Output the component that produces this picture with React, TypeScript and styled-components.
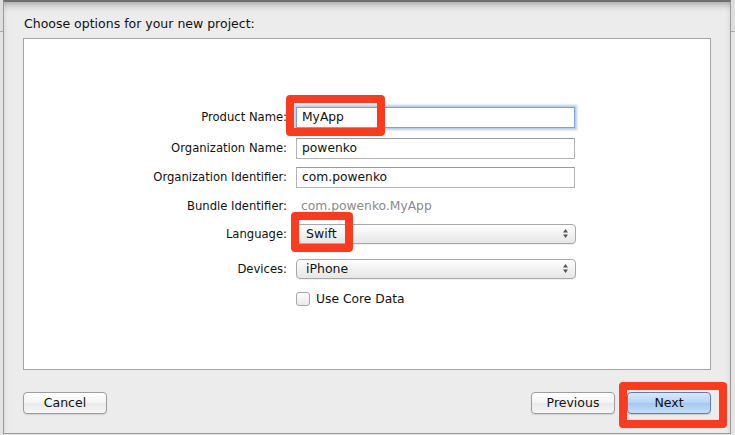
import React from "react";
import styled, { createGlobalStyle } from "styled-components";

const GlobalStyle = createGlobalStyle`
	html, body {
		margin: 0;
		padding: 0;
	}
	body {
		width: 735px;
		height: 435px;
		overflow: hidden;
		background: linear-gradient(#dedede 0, #dedede 31px, #a9a9a9 31px, #a9a9a9 32px, #e4e4e4 32px);
		font-family: "DejaVu Sans", "Liberation Sans", sans-serif;
		font-size: 12px;
		color: #111;
	}
`;

const Sheet = styled.div`
	box-sizing: border-box;
	margin: 0 4px 0 3px;
	height: 434px;
	background: #ececec;
	border-left: 1px solid #9a9a9a;
	border-right: 1px solid #9a9a9a;
	border-bottom: 1px solid #9a9a9a;
	border-top: 2px solid #6f6f6f;
	box-shadow: inset 0 6px 8px -4px rgba(0, 0, 0, 0.35);
	padding: 14px 19px 0 19px;
	display: flex;
	flex-direction: column;
`;

const Title = styled.div`
	font-size: 12.5px;
	height: 22px;
	padding-left: 1px;
`;

const Content = styled.div`
	box-sizing: border-box;
	height: 334px;
	background: #fff;
	border: 1px solid #a4a4a4;
	padding: 68px 0 0 123px;
`;

const Row = styled.div<{ $h: number; $mt: number }>`
	display: flex;
	align-items: center;
	height: ${(p) => p.$h}px;
	margin-top: ${(p) => p.$mt}px;
`;

const Label = styled.div`
	width: 140px;
	text-align: right;
	margin-right: 9px;
	white-space: nowrap;
	font-size: 11.6px;
`;

const TextField = styled.div<{ $focused?: boolean }>`
	box-sizing: border-box;
	width: 279px;
	height: 100%;
	display: flex;
	align-items: center;
	padding-left: 5px;
	background: #fff;
	font-size: 12.3px;
	border: 1px solid ${(p) => (p.$focused ? "#7aa3d6" : "#b4b4b4")};
	border-top-color: ${(p) => (p.$focused ? "#7aa3d6" : "#9a9a9a")};
	box-shadow: ${(p) => (p.$focused ? "0 0 2px 2px rgba(120, 160, 215, 0.55)" : "none")};
`;

const Static = styled.div`
	padding-left: 5px;
	color: #8a8a8a;
	font-size: 12.3px;
`;

const Popup = styled.div`
	box-sizing: border-box;
	width: 280px;
	height: 100%;
	display: flex;
	align-items: center;
	justify-content: space-between;
	padding: 0 6px 0 9px;
	border: 1px solid #a8a8a8;
	border-radius: 4px;
	background: linear-gradient(#ffffff, #f1f1f1 55%, #e6e6e6);
	box-shadow: 0 1px 0 rgba(0, 0, 0, 0.06);
	font-size: 12.5px;
`;

const Arrows = () => (
	<svg width="7" height="11" viewBox="0 0 7 11">
		<path d="M3.5 1 L6 4.5 H1 Z" fill="#555" />
		<path d="M3.5 10 L6 6.5 H1 Z" fill="#555" />
	</svg>
);

const CheckBox = styled.div`
	box-sizing: border-box;
	width: 14px;
	height: 14px;
	margin: 0 6px 0 0;
	border: 1px solid #a6a6a6;
	border-radius: 3px;
	background: linear-gradient(#ffffff, #e9e9e9);
`;

const CheckLabel = styled.span`
	font-size: 12.3px;
`;

const Footer = styled.div`
	display: flex;
	align-items: center;
	height: 61px;
	padding-top: 3px;
`;

const Spacer = styled.div`
	flex: 1;
`;

const Button = styled.div<{ $primary?: boolean }>`
	box-sizing: border-box;
	width: 84px;
	height: 22px;
	display: flex;
	align-items: center;
	justify-content: center;
	border-radius: 4px;
	border: 1px solid ${(p) => (p.$primary ? "#5b7fae" : "#9d9d9d")};
	background: ${(p) =>
		p.$primary
			? "linear-gradient(#d9e9fb, #b5d3f6 50%, #a2c8f3 51%, #c6e0fb)"
			: "linear-gradient(#ffffff, #f3f3f3 50%, #e9e9e9 51%, #f6f6f6)"};
	box-shadow: 0 1px 1px rgba(0, 0, 0, 0.12);
	font-size: 12.5px;
`;

const Mark = styled.div<{ $l: number; $t: number; $w: number; $h: number }>`
	position: absolute;
	left: ${(p) => p.$l}px;
	top: ${(p) => p.$t}px;
	width: ${(p) => p.$w}px;
	height: ${(p) => p.$h}px;
	box-sizing: border-box;
	border: 8px solid #fb3a1e;
	border-radius: 4px;
	pointer-events: none;
`;

const Anchor = styled.div`
	position: relative;
	height: 100%;
`;

const NextWrap = styled.div`
	position: relative;
	margin-left: 12px;
`;

const App: React.FC = () => {
	return (
		<>
			<GlobalStyle />
			<Sheet>
				<Title>Choose options for your new project:</Title>
				<Content>
					<Row $h={21} $mt={0}>
						<Label>Product Name:</Label>
						<Anchor>
							<TextField $focused>MyApp</TextField>
							<Mark $l={-10} $t={-12} $w={99} $h={41} />
						</Anchor>
					</Row>
					<Row $h={21} $mt={10}>
						<Label>Organization Name:</Label>
						<TextField>powenko</TextField>
					</Row>
					<Row $h={21} $mt={8}>
						<Label>Organization Identifier:</Label>
						<TextField>com.powenko</TextField>
					</Row>
					<Row $h={16} $mt={10}>
						<Label>Bundle Identifier:</Label>
						<Static>com.powenko.MyApp</Static>
					</Row>
					<Row $h={20} $mt={10}>
						<Label>Language:</Label>
						<Anchor>
							<Popup>
								<span>Swift</span>
								<Arrows />
							</Popup>
							<Mark $l={-5} $t={-12} $w={62} $h={40} />
						</Anchor>
					</Row>
					<Row $h={20} $mt={15}>
						<Label>Devices:</Label>
						<Popup>
							<span>iPhone</span>
							<Arrows />
						</Popup>
					</Row>
					<Row $h={15} $mt={13}>
						<Label />
						<CheckBox />
						<CheckLabel>Use Core Data</CheckLabel>
					</Row>
				</Content>
				<Footer>
					<Button>Cancel</Button>
					<Spacer />
					<Button>Previous</Button>
					<NextWrap>
						<Button $primary>Next</Button>
						<Mark $l={-8} $t={-10} $w={108} $h={46} />
					</NextWrap>
				</Footer>
			</Sheet>
		</>
	);
};

export default App;
